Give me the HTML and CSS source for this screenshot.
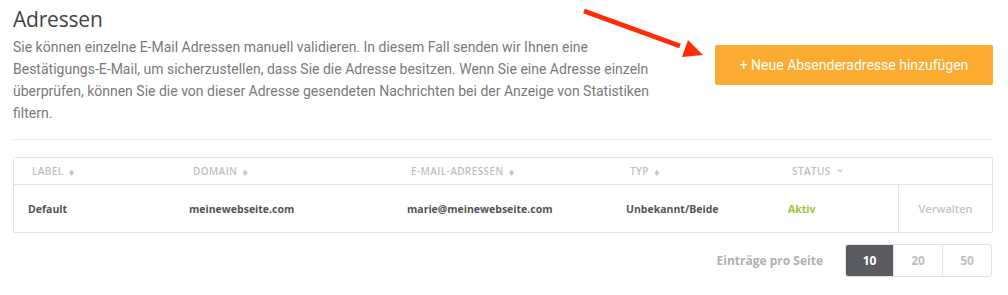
FILE: index.html
```html
<!DOCTYPE html>
<html>
<head>
<meta charset="utf-8">
<link rel="stylesheet" href="styles.css">
</head>
<body>
<div class="page">
  <div class="top">
    <div class="intro">
      <h1 class="title">Adressen</h1>
      <p class="desc">Sie können einzelne E-Mail Adressen manuell validieren. In diesem Fall senden wir Ihnen eine Bestätigungs-E-Mail, um sicherzustellen, dass Sie die Adresse besitzen. Wenn Sie eine Adresse einzeln überprüfen, können Sie die von dieser Adresse gesendeten Nachrichten bei der Anzeige von Statistiken filtern.</p>
    </div>
    <button class="add-btn">+ Neue Absenderadresse hinzufügen</button>
    <svg class="arrow" width="130" height="60" viewBox="0 0 130 60">
      <line x1="14" y1="11" x2="110" y2="46" stroke="#ff2d05" stroke-width="5"/>
      <polygon points="133,55 118,40 112,57" fill="#ff2d05"/>
    </svg>
  </div>
  <hr class="sep">
  <div class="table">
    <div class="row head">
      <div class="c c1">LABEL <span class="sort">&#9830;</span></div>
      <div class="c c2">DOMAIN <span class="sort">&#9830;</span></div>
      <div class="c c3">E-MAIL-ADRESSEN <span class="sort">&#9830;</span></div>
      <div class="c c4">TYP <span class="sort">&#9830;</span></div>
      <div class="c c5">STATUS <span class="sort down">&#8964;</span></div>
      <div class="c c6"></div>
    </div>
    <div class="row body">
      <div class="c c1">Default</div>
      <div class="c c2">meinewebseite.com</div>
      <div class="c c3">marie@meinewebseite.com</div>
      <div class="c c4">Unbekannt/Beide</div>
      <div class="c c5 ok">Aktiv</div>
      <div class="c c6 manage">Verwalten</div>
    </div>
  </div>
  <div class="pager">
    <span class="pager-label">Einträge pro Seite</span>
    <div class="pages">
      <span class="pg active">10</span>
      <span class="pg">20</span>
      <span class="pg">50</span>
    </div>
  </div>
</div>
</body>
</html>
```
FILE: styles.css
```css
* { box-sizing: border-box; }
body { margin: 0; background: #fff; font-family: Roboto, "Liberation Sans", sans-serif; }
.page { padding: 0 15px 0 13px; width: 1008px; }
.top { display: flex; align-items: flex-start; justify-content: space-between; position: relative; }
.intro { width: 650px; }
.title { margin: 4px 0 0; font-family: "Open Sans", sans-serif; font-weight: 400; font-size: 21px; line-height: 30px; color: #444; letter-spacing: -0.2px; }
.desc { margin: 2px 0 0; font-size: 14px; line-height: 22px; color: #7a7a7a; }
.add-btn { margin-top: 45px; width: 278px; height: 40px; border: none; border-radius: 2px; background: #faab30; color: #fff; font-family: Roboto, sans-serif; font-size: 14px; padding: 0; }
.arrow { position: absolute; left: 557px; top: 0; overflow: visible; }
.sep { margin: 15px 0 0; border: none; border-top: 1px solid #e6e6e6; height: 0; }
.table { margin-top: 17px; border: 1px solid #e3e3e3; border-radius: 2px; font-family: "Open Sans", sans-serif; }
.row { display: flex; }
.head { height: 27px; border-bottom: 1px solid #e3e3e3; }
.body { height: 47px; }
.c { display: flex; align-items: center; }
.c1 { width: 161px; }
.c2 { width: 218px; }
.c3 { width: 219px; }
.c4 { width: 162px; }
.c5 { width: 124px; }
.c6 { flex: 1; }
.head .c { padding-left: 18px; font-size: 10px; font-weight: 600; color: #c0c0c0; letter-spacing: 0.4px; }
.sort { font-size: 11px; margin-left: 5px; color: #c8c8c8; }
.sort.down { font-size: 10px; position: relative; top: -3px; }
.body .c { padding-left: 14px; font-size: 10.5px; font-weight: 700; color: #555; }
.body .ok { color: #9cc43c; }
.body .manage { border-left: 1px solid #e3e3e3; justify-content: center; padding-left: 0; color: #c4c4c4; font-weight: 600; font-size: 11px; }
.pager { display: flex; justify-content: flex-end; align-items: center; margin-top: 11px; }
.pager-label { font-family: "Open Sans", sans-serif; font-size: 12px; font-weight: 700; color: #b0b0b0; margin-right: 22px; }
.pages { display: flex; border: 1px solid #e3e3e3; border-radius: 3px; height: 33px; overflow: hidden; margin-right: 1px; }
.pg { display: flex; align-items: center; justify-content: center; width: 49px; font-family: "Open Sans", sans-serif; font-size: 12px; font-weight: 700; color: #c0c0c0; border-left: 1px solid #e3e3e3; }
.pg:first-child { border-left: none; width: 47px; }
.pg.active { background: #5a5b60; color: #fff; }
```
